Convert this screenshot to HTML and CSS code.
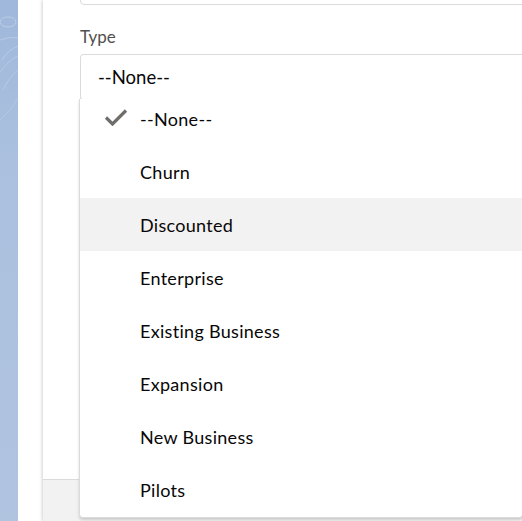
FILE: index.html
```html
<!DOCTYPE html>
<html>
<head>
<meta charset="utf-8">
<link rel="stylesheet" href="styles.css">
</head>
<body>
<div class="page">
  <div class="strip">
    <svg class="strip-art" width="18" height="521" viewBox="0 0 18 521">
      <ellipse cx="8" cy="22" rx="8" ry="5" fill="none" stroke="#ffffff" stroke-opacity="0.35" stroke-width="0.8"/>
      <path d="M0 40 Q10 36 18 38" fill="none" stroke="#ffffff" stroke-opacity="0.3" stroke-width="0.8"/>
      <path d="M2 60 Q8 50 18 46" fill="none" stroke="#ffffff" stroke-opacity="0.3" stroke-width="0.8"/>
      <path d="M0 72 Q9 60 18 56" fill="none" stroke="#ffffff" stroke-opacity="0.25" stroke-width="0.8"/>
      <path d="M3 90 Q10 76 18 70" fill="none" stroke="#ffffff" stroke-opacity="0.25" stroke-width="0.8"/>
      <path d="M0 120 Q12 110 18 98" fill="none" stroke="#ffffff" stroke-opacity="0.2" stroke-width="0.8"/>
    </svg>
  </div>
  <div class="gutter"></div>
  <div class="modal">
    <div class="form">
      <div class="field-prev"></div>
      <div class="label">Type</div>
      <div class="select">--None--</div>
      <div class="field-behind"></div>
      <div class="field-behind second"></div>
    </div>
    <div class="footer"></div>
    <div class="dropdown">
      <ul class="list">
        <li class="item selected">
          <svg class="check" width="24" height="18" viewBox="0 0 24 18"><path d="M2 9.5 L8.5 16 L22 2.5" fill="none" stroke="#706e6b" stroke-width="3.2"/></svg>
          <span>--None--</span>
        </li>
        <li class="item"><span>Churn</span></li>
        <li class="item hover"><span>Discounted</span></li>
        <li class="item"><span>Enterprise</span></li>
        <li class="item"><span>Existing Business</span></li>
        <li class="item"><span>Expansion</span></li>
        <li class="item"><span>New Business</span></li>
        <li class="item"><span>Pilots</span></li>
      </ul>
    </div>
  </div>
</div>
</body>
</html>
```
FILE: styles.css
```css
html, body {
  margin: 0;
  padding: 0;
  width: 522px;
  height: 521px;
  overflow: hidden;
  background: #ffffff;
  font-family: Lato, "Open Sans", sans-serif;
}
.page {
  display: flex;
  width: 522px;
  height: 521px;
}
.strip {
  width: 18px;
  flex: none;
  background: linear-gradient(180deg, #9fb8db 0%, #aac0de 30%, #b0c4e0 100%);
}
.strip-art { display: block; }
.gutter {
  width: 25px;
  flex: none;
  background: #ffffff;
}
.modal {
  position: relative;
  flex: 1;
  min-width: 0;
  overflow: hidden;
  height: 521px;
  display: flex;
  flex-direction: column;
  background: #ffffff;
  box-shadow: -1px 0 3px rgba(0, 0, 0, 0.18);
}
.form {
  flex: 1;
  padding-left: 37px;
  display: flex;
  flex-direction: column;
}
.field-prev {
  margin-top: -40px;
  height: 43px;
  width: 470px;
  border: 1px solid #dddbda;
  border-radius: 4px;
}
.label {
  margin-top: 19px;
  height: 25px;
  font-size: 17px;
  line-height: 25px;
  color: #514f4d;
}
.select {
  margin-top: 5px;
  box-sizing: border-box;
  height: 47px;
  width: 470px;
  border: 1px solid #dddbda;
  border-bottom: 2px solid #dddbda;
  border-radius: 4px;
  padding-left: 17px;
  font-size: 18.5px;
  line-height: 44px;
  color: #080707;
}
.field-behind {
  margin-top: 36px;
  height: 46px;
  width: 470px;
  margin-left: -1px;
  border: 1px solid #dddbda;
  border-radius: 4px;
}
.field-behind.second {
  margin-top: 36px;
}
.footer {
  height: 41px;
  flex: none;
  background: #f3f2f2;
  border-top: 1px solid #dddbda;
}
.dropdown {
  position: absolute;
  left: 36px;
  top: 99px;
  width: 444px;
  height: 419px;
  box-sizing: border-box;
  overflow: hidden;
  background: #ffffff;
  border: 1px solid #dddbda;
  border-top: none;
  border-radius: 0 0 4px 4px;
  box-shadow: 0 2px 3px rgba(0, 0, 0, 0.16);
}
.list {
  list-style: none;
  margin: -7px 0 0 0;
  padding: 0;
}
.item {
  position: relative;
  height: 53px;
  display: flex;
  align-items: center;
  padding-left: 60px;
  font-size: 18px;
  letter-spacing: 0.3px;
  color: #080707;
}
.item.hover {
  background: #f3f2f2;
}
.check {
  position: absolute;
  left: 24px;
  top: 16px;
}
```
